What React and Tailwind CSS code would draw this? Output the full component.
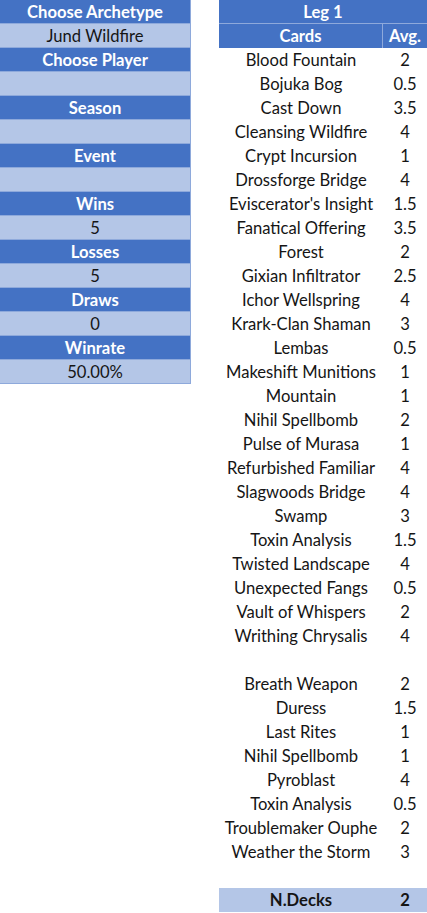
const leftRows = [
    { label: "Choose Archetype", value: "Jund Wildfire" },
    { label: "Choose Player", value: "" },
    { label: "Season", value: "" },
    { label: "Event", value: "" },
    { label: "Wins", value: "5" },
    { label: "Losses", value: "5" },
    { label: "Draws", value: "0" },
    { label: "Winrate", value: "50.00%" },
];

const mainDeck = [
    ["Blood Fountain", "2"],
    ["Bojuka Bog", "0.5"],
    ["Cast Down", "3.5"],
    ["Cleansing Wildfire", "4"],
    ["Crypt Incursion", "1"],
    ["Drossforge Bridge", "4"],
    ["Eviscerator's Insight", "1.5"],
    ["Fanatical Offering", "3.5"],
    ["Forest", "2"],
    ["Gixian Infiltrator", "2.5"],
    ["Ichor Wellspring", "4"],
    ["Krark-Clan Shaman", "3"],
    ["Lembas", "0.5"],
    ["Makeshift Munitions", "1"],
    ["Mountain", "1"],
    ["Nihil Spellbomb", "2"],
    ["Pulse of Murasa", "1"],
    ["Refurbished Familiar", "4"],
    ["Slagwoods Bridge", "4"],
    ["Swamp", "3"],
    ["Toxin Analysis", "1.5"],
    ["Twisted Landscape", "4"],
    ["Unexpected Fangs", "0.5"],
    ["Vault of Whispers", "2"],
    ["Writhing Chrysalis", "4"],
];

const sideboard = [
    ["Breath Weapon", "2"],
    ["Duress", "1.5"],
    ["Last Rites", "1"],
    ["Nihil Spellbomb", "1"],
    ["Pyroblast", "4"],
    ["Toxin Analysis", "0.5"],
    ["Troublemaker Ouphe", "2"],
    ["Weather the Storm", "3"],
];

const CardRow = ({ name, avg }) => (
    <div className="flex h-6 items-center pt-px">
        <div className="w-[164px] text-center">{name}</div>
        <div className="flex-1 text-center">{avg}</div>
    </div>
);

const App = () => {
    return (
        <div
            className="flex h-[913px] w-[427px] bg-white text-[16.6px] leading-none text-[#151515]"
            style={{ fontFamily: "Lato, 'Open Sans', sans-serif" }}
        >
            {/* Stats panel */}
            <div className="w-[191px]">
                {leftRows.map((row) => (
                    <div key={row.label}>
                        <div className="box-border flex h-6 items-center justify-center border-b border-r border-[#8EA9DB] bg-[#4472C4] pt-px font-bold text-white">
                            {row.label}
                        </div>
                        <div className="box-border flex h-6 items-center justify-center border-b border-r border-[#8EA9DB] bg-[#B4C6E7] pt-px">
                            {row.value}
                        </div>
                    </div>
                ))}
            </div>

            {/* Card list */}
            <div className="ml-auto w-[208px]">
                <div className="box-border flex h-6 items-center justify-center border-b border-[#8EA9DB] bg-[#4472C4] pt-px font-bold text-white">
                    Leg 1
                </div>
                <div className="flex h-6 bg-[#4472C4] font-bold text-white">
                    <div className="flex w-[164px] items-center justify-center border-r border-[#8EA9DB] pt-px">
                        Cards
                    </div>
                    <div className="flex flex-1 items-center justify-center pt-px">Avg.</div>
                </div>
                {mainDeck.map(([name, avg]) => (
                    <CardRow key={name} name={name} avg={avg} />
                ))}
                <div className="h-6" />
                {sideboard.map(([name, avg]) => (
                    <CardRow key={"sb-" + name} name={name} avg={avg} />
                ))}
                <div className="h-6" />
                <div className="flex h-6 items-center bg-[#B4C6E7] pt-px font-bold">
                    <div className="w-[164px] text-center">N.Decks</div>
                    <div className="flex-1 text-center">2</div>
                </div>
            </div>
        </div>
    );
};

export default App;
